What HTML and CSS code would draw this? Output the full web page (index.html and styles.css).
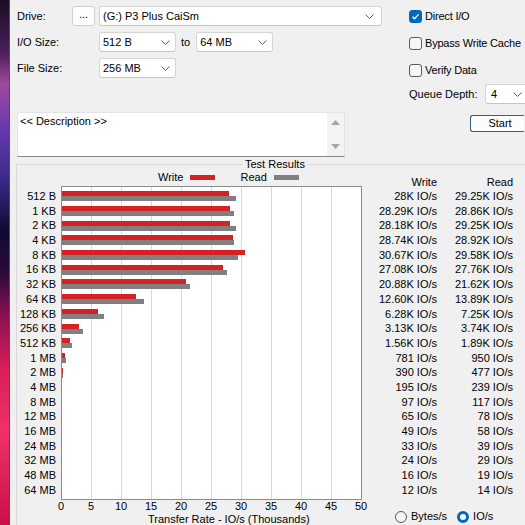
FILE: index.html
```html
<!DOCTYPE html>
<html>
<head>
<meta charset="utf-8">
<link rel="stylesheet" href="styles.css">
</head>
<body>
<div class="screen">
  <div class="wallpaper"></div>
  <div class="window">
    <div class="top">
      <div class="form">
        <div class="row">
          <span class="lbl short">Drive:</span>
          <button class="dots">...</button>
          <div class="combo drive"><span>(G:) P3 Plus CaiSm</span><svg class="chev" width="9" height="5" viewBox="0 0 9 5"><polyline points="0.5,0.5 4.5,4.5 8.5,0.5" /></svg></div>
        </div>
        <div class="row">
          <span class="lbl">I/O Size:</span>
          <div class="combo size"><span>512 B</span><svg class="chev" width="9" height="5" viewBox="0 0 9 5"><polyline points="0.5,0.5 4.5,4.5 8.5,0.5" /></svg></div>
          <span class="to">to</span>
          <div class="combo size"><span>64 MB</span><svg class="chev" width="9" height="5" viewBox="0 0 9 5"><polyline points="0.5,0.5 4.5,4.5 8.5,0.5" /></svg></div>
        </div>
        <div class="row">
          <span class="lbl">File Size:</span>
          <div class="combo size"><span>256 MB</span><svg class="chev" width="9" height="5" viewBox="0 0 9 5"><polyline points="0.5,0.5 4.5,4.5 8.5,0.5" /></svg></div>
        </div>
      </div>
      <div class="options">
        <div class="check"><span class="box on"><svg width="11" height="11" viewBox="0 0 11 11"><polyline points="2.5,5.8 4.6,7.8 8.6,3.4" /></svg></span><span class="ctext">Direct I/O</span></div>
        <div class="check"><span class="box"></span><span class="ctext">Bypass Write Cache</span></div>
        <div class="check"><span class="box"></span><span class="ctext">Verify Data</span></div>
        <div class="queue">
          <span class="qlbl">Queue Depth:</span>
          <div class="combo qd"><span>4</span><svg class="chev" width="9" height="5" viewBox="0 0 9 5"><polyline points="0.5,0.5 4.5,4.5 8.5,0.5" /></svg></div>
        </div>
      </div>
    </div>

    <div class="desc-row">
      <div class="desc">
        <div class="desc-text">&lt;&lt; Description &gt;&gt;</div>
        <div class="scroll">
          <svg width="9" height="5" viewBox="0 0 9 5"><polygon points="0,5 4.5,0 9,5" /></svg>
          <svg width="9" height="5" viewBox="0 0 9 5"><polygon points="0,0 4.5,5 9,0" /></svg>
        </div>
      </div>
      <button class="start">Start</button>
    </div>

    <fieldset class="results">
      <legend>Test Results</legend>
      <div class="results-body">
        <div class="chart">
          <div class="legend-row">
            <span>Write</span><span class="swatch write"></span>
            <span class="legend-read">Read</span><span class="swatch read"></span>
          </div>
          <div class="chart-main">
            <div class="ylabels">
              <div>512 B</div><div>1 KB</div><div>2 KB</div><div>4 KB</div><div>8 KB</div><div>16 KB</div><div>32 KB</div><div>64 KB</div><div>128 KB</div><div>256 KB</div><div>512 KB</div><div>1 MB</div><div>2 MB</div><div>4 MB</div><div>8 MB</div><div>12 MB</div><div>16 MB</div><div>24 MB</div><div>32 MB</div><div>48 MB</div><div>64 MB</div>
            </div>
            <div class="plot">
              <div class="bar-row"><i class="bar w" style="width:167px"></i><i class="bar r" style="width:174px"></i></div>
              <div class="bar-row"><i class="bar w" style="width:168px"></i><i class="bar r" style="width:172px"></i></div>
              <div class="bar-row"><i class="bar w" style="width:168px"></i><i class="bar r" style="width:174px"></i></div>
              <div class="bar-row"><i class="bar w" style="width:171px"></i><i class="bar r" style="width:172px"></i></div>
              <div class="bar-row"><i class="bar w" style="width:183px"></i><i class="bar r" style="width:176px"></i></div>
              <div class="bar-row"><i class="bar w" style="width:161px"></i><i class="bar r" style="width:165px"></i></div>
              <div class="bar-row"><i class="bar w" style="width:124px"></i><i class="bar r" style="width:128px"></i></div>
              <div class="bar-row"><i class="bar w" style="width:74px"></i><i class="bar r" style="width:82px"></i></div>
              <div class="bar-row"><i class="bar w" style="width:36px"></i><i class="bar r" style="width:42px"></i></div>
              <div class="bar-row"><i class="bar w" style="width:17px"></i><i class="bar r" style="width:21px"></i></div>
              <div class="bar-row"><i class="bar w" style="width:8px"></i><i class="bar r" style="width:10px"></i></div>
              <div class="bar-row"><i class="bar w" style="width:3px"></i><i class="bar r" style="width:4px"></i></div>
              <div class="bar-row"><i class="bar w" style="width:1px"></i><i class="bar r" style="width:1px"></i></div>
              <div class="bar-row"><i class="bar w" style="width:0px"></i><i class="bar r" style="width:0px"></i></div>
              <div class="bar-row"><i class="bar w" style="width:0px"></i><i class="bar r" style="width:0px"></i></div>
              <div class="bar-row"><i class="bar w" style="width:0px"></i><i class="bar r" style="width:0px"></i></div>
              <div class="bar-row"><i class="bar w" style="width:0px"></i><i class="bar r" style="width:0px"></i></div>
              <div class="bar-row"><i class="bar w" style="width:0px"></i><i class="bar r" style="width:0px"></i></div>
              <div class="bar-row"><i class="bar w" style="width:0px"></i><i class="bar r" style="width:0px"></i></div>
              <div class="bar-row"><i class="bar w" style="width:0px"></i><i class="bar r" style="width:0px"></i></div>
              <div class="bar-row"><i class="bar w" style="width:0px"></i><i class="bar r" style="width:0px"></i></div>
            </div>
          </div>
          <div class="xlabels">
            <span>0</span><span>5</span><span>10</span><span>15</span><span>20</span><span>25</span><span>30</span><span>35</span><span>40</span><span>45</span><span>50</span>
          </div>
          <div class="xtitle">Transfer Rate - IO/s (Thousands)</div>
        </div>
        <div class="table">
          <div class="trow head"><span>Write</span><span>Read</span></div>
          <div class="trow"><span>28K IO/s</span><span>29.25K IO/s</span></div>
          <div class="trow"><span>28.29K IO/s</span><span>28.86K IO/s</span></div>
          <div class="trow"><span>28.18K IO/s</span><span>29.25K IO/s</span></div>
          <div class="trow"><span>28.74K IO/s</span><span>28.92K IO/s</span></div>
          <div class="trow"><span>30.67K IO/s</span><span>29.58K IO/s</span></div>
          <div class="trow"><span>27.08K IO/s</span><span>27.76K IO/s</span></div>
          <div class="trow"><span>20.88K IO/s</span><span>21.62K IO/s</span></div>
          <div class="trow"><span>12.60K IO/s</span><span>13.89K IO/s</span></div>
          <div class="trow"><span>6.28K IO/s</span><span>7.25K IO/s</span></div>
          <div class="trow"><span>3.13K IO/s</span><span>3.74K IO/s</span></div>
          <div class="trow"><span>1.56K IO/s</span><span>1.89K IO/s</span></div>
          <div class="trow"><span>781 IO/s</span><span>950 IO/s</span></div>
          <div class="trow"><span>390 IO/s</span><span>477 IO/s</span></div>
          <div class="trow"><span>195 IO/s</span><span>239 IO/s</span></div>
          <div class="trow"><span>97 IO/s</span><span>117 IO/s</span></div>
          <div class="trow"><span>65 IO/s</span><span>78 IO/s</span></div>
          <div class="trow"><span>49 IO/s</span><span>58 IO/s</span></div>
          <div class="trow"><span>33 IO/s</span><span>39 IO/s</span></div>
          <div class="trow"><span>24 IO/s</span><span>29 IO/s</span></div>
          <div class="trow"><span>16 IO/s</span><span>19 IO/s</span></div>
          <div class="trow"><span>12 IO/s</span><span>14 IO/s</span></div>
          <div class="units">
            <span class="radio"></span><span class="rlbl">Bytes/s</span>
            <span class="radio on"></span><span class="rlbl">IO/s</span>
          </div>
        </div>
      </div>
    </fieldset>
  </div>
</div>
</body>
</html>
```

FILE: styles.css
```css
* { box-sizing: border-box; }
html, body { margin: 0; padding: 0; }
body {
  width: 525px;
  height: 525px;
  overflow: hidden;
  font-family: "Liberation Sans", Arial, sans-serif;
  font-size: 11px;
  line-height: 13px;
  color: #000;
  background: #f0f0f0;
}
.screen { display: flex; width: 525px; height: 525px; overflow: hidden; }
.wallpaper {
  flex: none;
  width: 9px;
  background: linear-gradient(to bottom, #1a0c22 0%, #4a1f5c 10%, #a04a9a 16%, #6a3ab0 24%, #3a2a8a 34%, #0e0a30 44%, #2a0c3a 52%, #8a1050 60%, #d81e5a 70%, #f0306a 82%, #c8104a 100%);
}
.window {
  flex: none;
  width: 516px;
  height: 525px;
  overflow: hidden;
  background: #f0f0f0;
  border-left: 1px solid #4e4e4e;
  padding: 6px 0 0 7px;
}

/* top controls */
.top { display: flex; height: 98px; }
.form { width: 392px; flex: none; display: flex; flex-direction: column; gap: 6px; }
.row { display: flex; align-items: center; height: 20px; }
.lbl { width: 82px; flex: none; }
.lbl.short { width: 55px; }
.dots {
  width: 23px; height: 20px; margin: 0 4px 0 0; padding: 0 0 3px;
  font: inherit; color: #000;
  background: #fdfdfd; border: 1px solid #d0d0d0; border-radius: 3px;
}
.combo {
  height: 20px; flex: none;
  display: flex; align-items: center; justify-content: space-between;
  padding: 0 5px 0 3px;
  background: #fff;
  border: 1px solid #d5d5d5; border-bottom-color: #c6c6c6;
  border-radius: 3px;
}
.combo.drive { width: 283px; padding-right: 7px; }
.combo.size { width: 77px; }
.combo.qd { width: 40px; padding: 0 3px 0 5px; border-right: none; border-radius: 3px 0 0 3px; }
.chev { flex: none; }
.chev polyline { fill: none; stroke: #606060; stroke-width: 1; }
.to { margin: 0 6px 0 5px; }

.options { width: 116px; flex: none; display: flex; flex-direction: column; gap: 7px; }
.check { display: flex; align-items: center; height: 20px; gap: 3px; white-space: nowrap; }
.ctext { letter-spacing: -0.2px; }
.box {
  width: 13px; height: 13px; flex: none;
  border: 1px solid #5a5a5a; border-radius: 3px; background: #f7f7f7;
  display: flex; align-items: center; justify-content: center;
}
.box.on { background: #0067c0; border-color: #0067c0; }
.box svg polyline { fill: none; stroke: #fff; stroke-width: 1.3; }
.queue { display: flex; align-items: center; height: 20px; margin-top: -3px; }
.qlbl { width: 76px; flex: none; }

/* description */
.desc-row { display: flex; align-items: flex-start; margin-top: 8px; }
.desc {
  width: 328px; height: 45px; flex: none;
  display: flex;
  background: #fff;
  border: 1px solid #e4e4e4; border-bottom-color: #8a8a8a;
}
.desc-text { flex: 1; padding: 2px 2px; }
.scroll {
  width: 17px; flex: none;
  background: #f3f3f3;
  display: flex; flex-direction: column; align-items: center; justify-content: space-between;
  padding: 7px 0 7px;
}
.scroll polygon { fill: #a6a6a6; }
.start {
  margin: 3px 0 0 125px;
  width: 54px; height: 17px; padding: 0 0 0 5px;
  flex: none;
  font: inherit; color: #000;
  background: #fdfdfd;
  border: 1px solid #2f5f8a; border-right: none; border-radius: 3px 0 0 3px;
}

/* results group */
.results {
  margin: 1px 0 0 -1px;
  padding: 0;
  width: 509px;
  height: 367px;
  border: 1px solid #d8d8d8;
  border-right: none; border-bottom: none;
  min-width: 0;
}
.results legend { margin-left: 226px; padding: 0 2px; line-height: 13px; }
.results-body { display: flex; }
.chart { width: 345px; flex: none; display: flex; flex-direction: column; }
.legend-row {
  display: flex; align-items: center;
  height: 13px; margin-bottom: 2px;
  padding-left: 141px;
}
.swatch { width: 25px; height: 5px; margin-left: 7px; }
.swatch.write { background: #d42224; }
.swatch.read { background: #808080; }
.legend-read { margin-left: 25px; }

.chart-main { display: flex; }
.ylabels {
  width: 39px; margin-right: 5px; padding-top: 3px;
  text-align: right;
}
.ylabels div { height: 14.7px; line-height: 14.7px; }
.plot {
  width: 301px; height: 314px;
  border: 1px solid #8c8c8c;
  padding-top: 2px;
  background-color: #fff;
  background-image: repeating-linear-gradient(to right, transparent 0 29px, #d9d9d9 29px 30px);
}
.bar-row { height: 14.7px; display: flex; flex-direction: column; justify-content: center; }
.bar { display: block; height: 5px; }
.bar.w { background: #d42224; }
.bar.r { background: #808080; }

.xlabels {
  display: grid; grid-template-columns: repeat(11, 30px);
  margin-left: 29px; height: 13px; text-align: center;
}
.xtitle { margin-left: 131px; height: 13px; white-space: nowrap; }

.table { display: flex; flex-direction: column; padding-top: 5px; }
.trow { display: flex; height: 14.7px; line-height: 14.7px; white-space: nowrap; }
.trow.head { height: 13px; line-height: 13px; }
.trow span:first-child { width: 75px; text-align: right; }
.trow span:last-child { width: 76px; text-align: right; }
.units { display: flex; align-items: center; height: 13px; margin-top: 13px; padding-left: 33px; }
.radio {
  width: 12px; height: 12px; flex: none;
  border: 1px solid #5a5a5a; border-radius: 50%; background: #f5f5f5;
}
.radio.on {
  border: 3.5px solid #0067c0; background: #fff;
}
.rlbl { margin-left: 4px; }
.rlbl + .radio { margin-left: 10px; }
```
